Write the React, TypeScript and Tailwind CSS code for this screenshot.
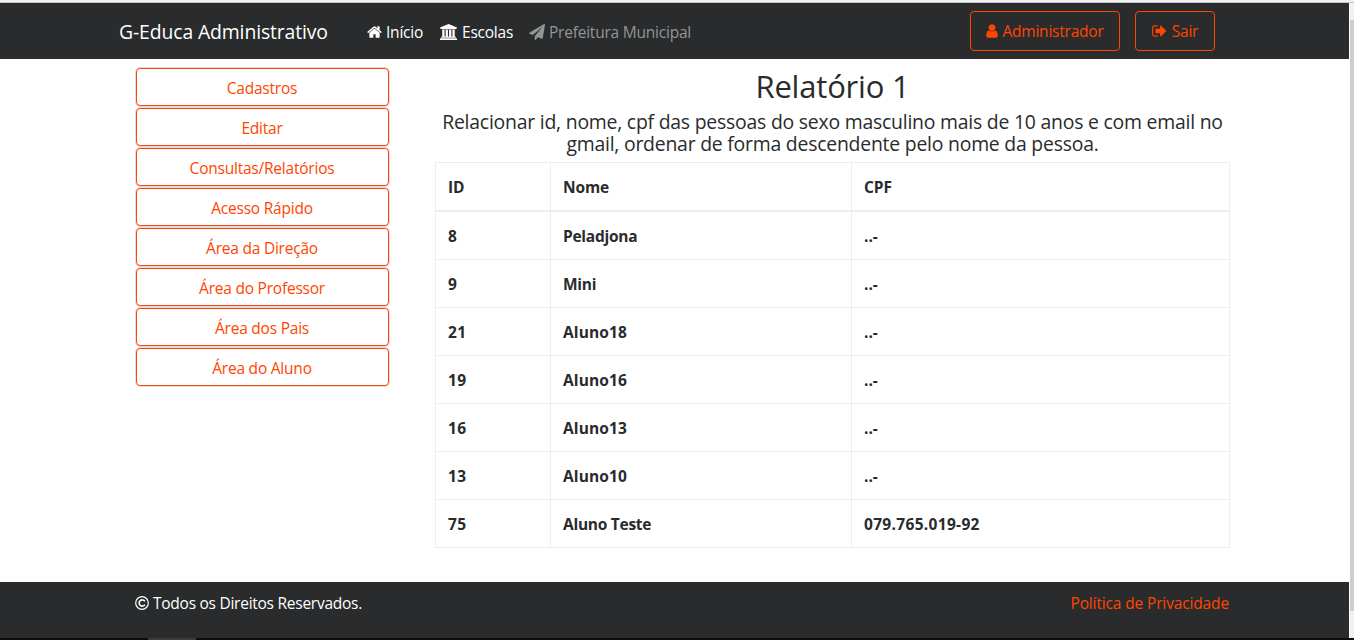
import React from "react";

const icons = {
  home: {
    box: "64 0 1664 1792",
    d: "M1472 992v480q0 26-19 45t-45 19h-384v-384h-256v384h-384q-26 0-45-19t-19-45v-480q0-1 .5-3t.5-3l575-474 575 474q1 2 1 6zm223-69l-62 74q-8 9-21 11h-3q-13 0-21-7l-692-577-692 577q-12 8-24 7-13-2-21-11l-62-74q-8-10-7-23.5t11-21.5l719-599q32-26 76-26t76 26l244 204v-195q0-14 9-23t23-9h192q14 0 23 9t9 23v408l219 182q10 8 11 21.5t-7 23.5z",
  },
  bank: {
    box: "-128 0 1920 1792",
    d: "M832 0l960 384v128h-128q0 26-20.5 45t-48.5 19h-1526q-28 0-48.5-19t-20.5-45h-128v-128zm-704 640h256v768h128v-768h256v768h128v-768h256v768h128v-768h256v768h59q28 0 48.5 19t20.5 45v64h-1664v-64q0-26 20.5-45t48.5-19h59v-768zm1595 960q28 0 48.5 19t20.5 45v128h-1920v-128q0-26 20.5-45t48.5-19h1782z",
  },
  plane: {
    box: "0 0 1792 1792",
    d: "M1764 11q33 24 27 64l-256 1536q-5 29-32 45-14 8-31 8-11 0-24-5l-453-185-242 295q-18 23-49 23-13 0-22-4-19-7-30.5-23.5t-11.5-36.5v-349l864-1059-1069 925-395-162q-37-14-40-55-2-40 32-59l1664-960q15-9 32-9 20 0 36 11z",
  },
  user: {
    box: "0 0 1280 1792",
    d: "M1280 1399q0 109-62.5 187t-150.5 78h-854q-88 0-150.5-78t-62.5-187q0-85 8.5-160.5t31.5-152 58.5-131 94-89 134.5-34.5q131 128 313 128t313-128q76 0 134.5 34.5t94 89 58.5 131 31.5 152 8.5 160.5zm-256-887q0 159-112.5 271.5t-271.5 112.5-271.5-112.5-112.5-271.5 112.5-271.5 271.5-112.5 271.5 112.5 112.5 271.5z",
  },
  signOut: {
    box: "64 0 1664 1792",
    d: "M704 1440q0 4 1 20t.5 26.5-3 23.5-10 19.5-20.5 6.5h-320q-119 0-203.5-84.5t-84.5-203.5v-704q0-119 84.5-203.5t203.5-84.5h320q13 0 22.5 9.5t9.5 22.5q0 4 1 20t.5 26.5-3 23.5-10 19.5-20.5 6.5h-320q-66 0-113 47t-47 113v704q0 66 47 113t113 47h312l11.5 1 11.5 3 8 5.5 7 9 2 13.5zm928-544q0 26-19 45l-544 544q-19 19-45 19t-45-19-19-45v-288h-448q-26 0-45-19t-19-45v-384q0-26 19-45t45-19h448v-288q0-26 19-45t45-19 45 19l544 544q19 19 19 45z",
  },
};

function Icon({ name, className }: { name: keyof typeof icons; className: string }) {
  return (
    <svg viewBox={icons[name].box} className={`h-4 shrink-0 ${className}`} fill="currentColor">
      <path d={icons[name].d} />
    </svg>
  );
}

const menu = [
  "Cadastros",
  "Editar",
  "Consultas/Relatórios",
  "Acesso Rápido",
  "Área da Direção",
  "Área do Professor",
  "Área dos Pais",
  "Área do Aluno",
];

const rows = [
  ["8", "Peladjona", "..-"],
  ["9", "Mini", "..-"],
  ["21", "Aluno18", "..-"],
  ["19", "Aluno16", "..-"],
  ["16", "Aluno13", "..-"],
  ["13", "Aluno10", "..-"],
  ["75", "Aluno Teste", "079.765.019-92"],
];

// Names that carry digits are set slightly wider than purely alphabetic ones.
function cellTracking(text: string) {
  if (text === "..-") return "tracking-normal";
  if (/^[\d.-]+$/.test(text)) return "tracking-[0.32px]";
  return /\d/.test(text) ? "tracking-[0.12px]" : "tracking-[-0.27px]";
}

function Header() {
  return (
    <header className="flex h-14 shrink-0 items-center bg-[#292b2c] pl-[119px] pr-[134px] text-white">
      <span className="w-[248px] pt-0.5 text-[19.4px] tracking-[-0.13px]">G-Educa Administrativo</span>
      <nav className="flex items-center pt-0.5">
        <a className="flex w-[73px] items-center gap-1">
          <Icon name="home" className="w-[15px]" />
          Início
        </a>
        <a className="flex w-[89px] items-center gap-[5px]">
          <Icon name="bank" className="w-[17px]" />
          Escolas
        </a>
        <a className="flex items-center gap-1 text-[#949595]">
          <Icon name="plane" className="w-4" />
          Prefeitura Municipal
        </a>
      </nav>
      <div className="ml-auto flex gap-[15px] text-[#ff4500]">
        <button className="flex h-10 w-[150px] items-center justify-center gap-1 rounded-[4px] border border-[#ff4500]">
          <Icon name="user" className="w-[12px]" />
          Administrador
        </button>
        <button className="flex h-10 w-20 items-center justify-center gap-[5px] rounded-[4px] border border-[#ff4500]">
          <Icon name="signOut" className="w-[15px]" />
          Sair
        </button>
      </div>
    </header>
  );
}

function Sidebar() {
  return (
    <aside className="ml-[135px] mt-2 w-[255px] shrink-0">
      {menu.map((label) => (
        <div key={label} className="h-10 rounded-[5px] border border-[#dfdfdf]">
          <button className="flex h-[38px] w-full items-center justify-center rounded-[4px] border border-[#ff4500] pr-px pt-px text-[#ff4500]">
            {label}
          </button>
        </div>
      ))}
    </aside>
  );
}

function Report() {
  return (
    <section className="ml-[45px] w-[795px] pt-2 text-[#292b2c]">
      <h2 className="h-11 text-center text-[31px] leading-[39px] tracking-[-0.2px]">Relatório 1</h2>
      <h5 className="h-[51px] text-center text-[19.4px] leading-[22px] tracking-[-0.22px]">
        Relacionar id, nome, cpf das pessoas do sexo masculino mais de 10 anos e com email no
        <br />
        gmail, ordenar de forma descendente pelo nome da pessoa.
      </h5>
      <table className="w-[795px] table-fixed border-separate border-spacing-0 border-l border-t border-[#eceeef] text-left font-bold">
        <colgroup>
          <col className="w-[115px]" />
          <col className="w-[301px]" />
          <col className="w-[378px]" />
        </colgroup>
        <thead>
          <tr>
            {["ID", "Nome", "CPF"].map((h) => (
              <th key={h} className="h-[49px] border-b-2 border-r border-[#eceeef] px-3 py-0 tracking-[-0.1px]">
                {h}
              </th>
            ))}
          </tr>
        </thead>
        <tbody>
          {rows.map((r) => (
            <tr key={r[0]}>
              {r.map((c, i) => (
                <td key={i} className={`h-12 border-b border-r border-[#eceeef] px-3 py-0 ${cellTracking(c)}`}>
                  {c}
                </td>
              ))}
            </tr>
          ))}
        </tbody>
      </table>
    </section>
  );
}

export default function App() {
  return (
    <div className="flex h-[640px] w-[1354px] flex-col overflow-hidden bg-white font-['Open_Sans',sans-serif] text-[15.5px] leading-6 tracking-[-0.22px]">
      <div className="h-[3px] shrink-0 border-b border-[#c4c4c4] bg-[#f2f2f2]" />
      <div className="flex h-[635px] shrink-0">
        <div className="flex w-[1349px] flex-col">
          <Header />
          <main className="flex h-[523px] shrink-0">
            <Sidebar />
            <Report />
          </main>
          <footer className="flex h-14 shrink-0 justify-between bg-[#292b2c] pl-[135px] pr-[120px] pt-[9px] text-white">
            <span className="flex h-6 items-center gap-1 tracking-[-0.26px]">
              <svg viewBox="0 0 14 14" className="h-3.5 w-3.5" fill="none" stroke="currentColor">
                <circle cx="7" cy="7" r="6.3" strokeWidth="1.2" />
                <path d="M9.9 5.4A3.1 3.1 0 1 0 9.9 8.6" strokeWidth="1.6" />
              </svg>
              Todos os Direitos Reservados.
            </span>
            <a className="tracking-[-0.14px] text-[#ff4500]">Política de Privacidade</a>
          </footer>
        </div>
        <div className="ml-px w-1 bg-[#f0f0f0] pt-[17px]">
          <div className="h-[591px] bg-[#cdcdcd]" />
        </div>
      </div>
      <div className="h-0.5 shrink-0 bg-[#0c0d06] pl-[148px]">
        <div className="h-full w-12 bg-[#3c3c3a]" />
      </div>
    </div>
  );
}
